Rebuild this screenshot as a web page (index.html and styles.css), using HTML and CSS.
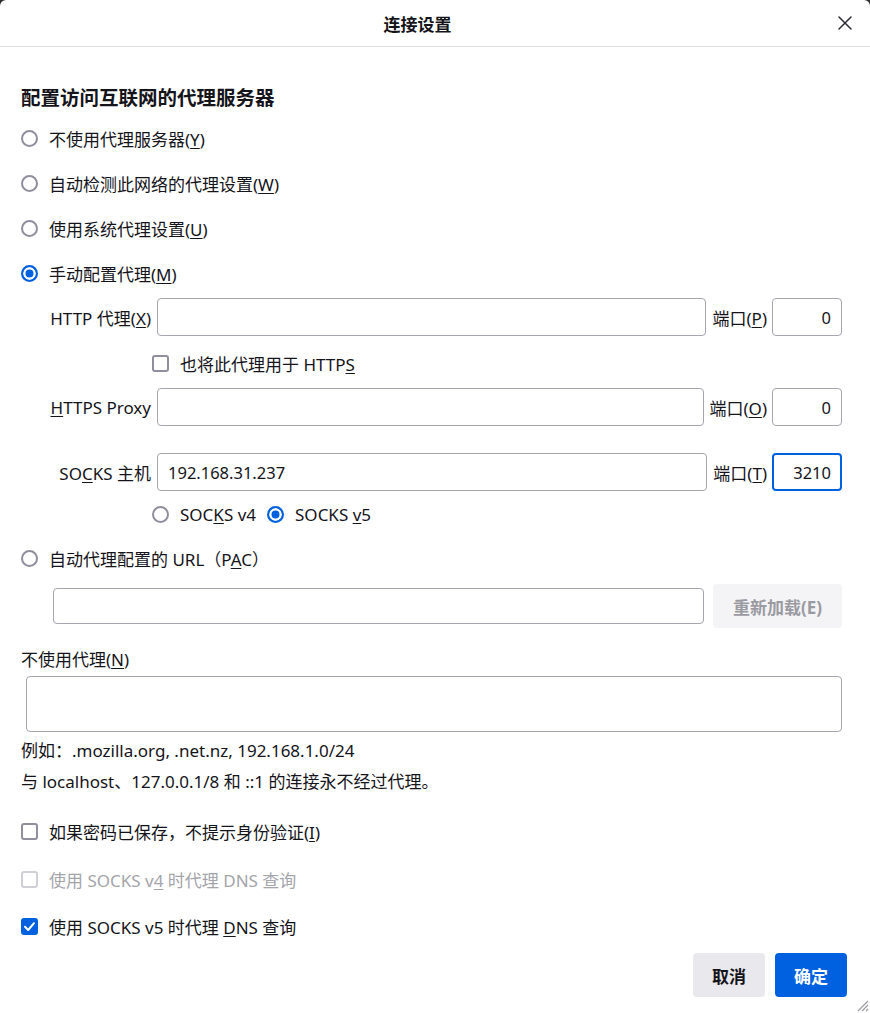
FILE: index.html
```html
<!DOCTYPE html>
<html lang="zh-CN">
<head>
<meta charset="utf-8">
<title>连接设置</title>
<link rel="stylesheet" href="styles.css">
</head>
<body>
<div class="dialog">
  <header class="titlebar">
    <div class="title">连接设置</div>
    <div class="close">
      <svg width="14" height="14" viewBox="0 0 14 14"><path d="M1 1L13 13M13 1L1 13" stroke="#2b2a33" stroke-width="1.5" stroke-linecap="round" fill="none"/></svg>
    </div>
  </header>
  <main class="content">
    <h1 class="heading">配置访问互联网的代理服务器</h1>

    <div class="radio-list">
      <div class="opt-row big"><span class="radio"></span><span class="lbl">不使用代理服务器(<u>Y</u>)</span></div>
      <div class="opt-row big"><span class="radio"></span><span class="lbl">自动检测此网络的代理设置(<u>W</u>)</span></div>
      <div class="opt-row big"><span class="radio"></span><span class="lbl">使用系统代理设置(<u>U</u>)</span></div>
      <div class="opt-row big"><span class="radio checked"></span><span class="lbl">手动配置代理(<u>M</u>)</span></div>
    </div>

    <div class="proxy-row row-http">
      <span class="field-label">HTTP 代理(<u>X</u>)</span>
      <div class="field"></div>
      <span class="port-label">端口(<u>P</u>)</span>
      <div class="field port">0</div>
    </div>

    <div class="opt-row indent row-also"><span class="checkbox"></span><span class="lbl">也将此代理用于 HTTP<u>S</u></span></div>

    <div class="proxy-row row-https">
      <span class="field-label"><u>H</u>TTPS Proxy</span>
      <div class="field"></div>
      <span class="port-label">端口(<u>O</u>)</span>
      <div class="field port">0</div>
    </div>

    <div class="proxy-row row-socks">
      <span class="field-label">SO<u>C</u>KS 主机</span>
      <div class="field">192.168.31.237</div>
      <span class="port-label">端口(<u>T</u>)</span>
      <div class="field port focused">3210</div>
    </div>

    <div class="opt-row indent row-ver">
      <span class="radio"></span><span class="lbl ver">SOC<u>K</u>S v4</span>
      <span class="radio checked"></span><span class="lbl">SOCKS <u>v</u>5</span>
    </div>

    <div class="opt-row row-pac"><span class="radio"></span><span class="lbl">自动代理配置的 URL（P<u>A</u>C）</span></div>

    <div class="pac-row">
      <div class="field pac"></div>
      <div class="btn disabled">重新加载(E)</div>
    </div>

    <div class="text-line row-noproxy">不使用代理(<u>N</u>)</div>
    <div class="field textarea"></div>
    <div class="text-line row-example">例如：.mozilla.org, .net.nz, 192.168.1.0/24</div>
    <div class="text-line row-local">与 localhost、127.0.0.1/8 和 ::1 的连接永不经过代理。</div>

    <div class="opt-row row-cb1"><span class="checkbox"></span><span class="lbl">如果密码已保存，不提示身份验证(<u>I</u>)</span></div>
    <div class="opt-row row-cb2 disabled-row"><span class="checkbox disabled"></span><span class="lbl">使用 SOCKS v<u>4</u> 时代理 DNS 查询</span></div>
    <div class="opt-row row-cb3"><span class="checkbox checked">
      <svg width="17" height="17" viewBox="0 0 17 17"><path d="M4 8.8L7.2 12L13 5.2" stroke="#fff" stroke-width="2" fill="none" stroke-linecap="round" stroke-linejoin="round"/></svg>
    </span><span class="lbl">使用 SOCKS v5 时代理 <u>D</u>NS 查询</span></div>

    <div class="actions">
      <div class="btn">取消</div>
      <div class="btn primary">确定</div>
    </div>
  </main>
  <svg class="grip" width="12" height="12" viewBox="0 0 12 12"><path d="M11 1L1 11M11 5L5 11M11 9L9 11" stroke="#9a9aa0" stroke-width="1.2" fill="none"/></svg>
</div>
</body>
</html>
```

FILE: styles.css
```css
html, body {
  margin: 0;
  padding: 0;
  background: #2e2e2e;
}

.dialog {
  position: relative;
  width: 870px;
  height: 1013px;
  background: #ffffff;
  border-radius: 6px 6px 0 0;
  overflow: hidden;
  font-family: "Noto Sans", "Noto Sans CJK SC", sans-serif;
  font-size: 17px;
  color: #15141a;
}

u {
  text-decoration: underline;
  text-underline-offset: 2px;
  text-decoration-thickness: 1px;
}

.titlebar {
  display: flex;
  align-items: center;
  height: 46px;
  border-bottom: 1px solid #dcdce1;
}

.title {
  flex: 1;
  text-align: center;
  font-weight: 700;
  font-size: 17px;
}

.close {
  width: 20px;
  margin-right: 15px;
  display: flex;
  justify-content: center;
  align-items: center;
}

.content {
  display: flex;
  flex-direction: column;
  padding: 0 28px 0 21px;
}

.heading {
  margin: 37px 0 0 0;
  height: 28px;
  line-height: 28px;
  font-size: 19.5px;
  font-weight: 700;
}

.radio-list {
  display: flex;
  flex-direction: column;
  margin-top: 4px;
}

.opt-row {
  display: flex;
  align-items: center;
  height: 30px;
}

.opt-row.big {
  height: 45px;
}

.opt-row.indent {
  padding-left: 131px;
}

.radio {
  box-sizing: border-box;
  flex: none;
  width: 17px;
  height: 17px;
  border: 2px solid #8f8f9d;
  border-radius: 50%;
  background: #fff;
}

.radio.checked {
  border-color: #0061e0;
  background: #0061e0;
  box-shadow: inset 0 0 0 2.5px #fff;
}

.checkbox {
  box-sizing: border-box;
  flex: none;
  width: 17px;
  height: 17px;
  border: 2px solid #8f8f9d;
  border-radius: 3px;
  background: #fff;
  display: flex;
}

.checkbox.checked {
  border: none;
  background: #0061e0;
}

.checkbox.disabled {
  border-color: #cfcfd6;
}

.lbl {
  margin-left: 11px;
  white-space: nowrap;
}

.lbl.ver {
  margin-right: 11px;
}

.disabled-row .lbl {
  color: #a4a4ab;
}

.proxy-row {
  display: flex;
  align-items: center;
  height: 38px;
}

.field-label {
  width: 130px;
  flex: none;
  text-align: right;
  white-space: nowrap;
}

.field {
  box-sizing: border-box;
  height: 38px;
  border: 1px solid #a6a6ae;
  border-radius: 4px;
  background: #fff;
  display: flex;
  align-items: center;
  padding: 0 10px;
  font-size: 16.5px;
}

.proxy-row .field:not(.port) {
  flex: 1;
  margin-left: 6px;
}

.port-label {
  margin-left: 6px;
  white-space: nowrap;
}

.field.port {
  width: 70px;
  flex: none;
  margin-left: 5px;
  justify-content: flex-end;
}

.field.port.focused {
  border: 2px solid #0061e0;
  padding-right: 9px;
}

.row-http { margin-top: 2px; }
.row-also { margin-top: 12px; }
.row-https { margin-top: 10px; }
.row-socks { margin-top: 27px; }
.row-ver { margin-top: 8px; }
.row-pac { margin-top: 14px; }

.pac-row {
  display: flex;
  align-items: center;
  margin-top: 11px;
  padding-left: 32px;
}

.field.pac {
  flex: 1;
  height: 36px;
}

.btn {
  box-sizing: border-box;
  height: 44px;
  display: flex;
  align-items: center;
  justify-content: center;
  padding: 0 19px;
  border-radius: 4px;
  background: #e9e9ed;
  font-weight: 700;
  white-space: nowrap;
}

.pac-row .btn {
  margin-left: 9px;
  width: 129px;
}

.btn.disabled {
  background: #f4f4f6;
  color: #9a9aa1;
}

.btn.primary {
  background: #0061e0;
  color: #fff;
}

.text-line {
  height: 24px;
  line-height: 24px;
  white-space: nowrap;
}

.row-noproxy { margin-top: 20px; }

.field.textarea {
  margin-top: 4px;
  margin-left: 5px;
  height: 56px;
}

.row-example { margin-top: 7px; }
.row-local { margin-top: 7px; }
.row-cb1 { margin-top: 22px; }
.row-cb2 { margin-top: 18px; }
.row-cb3 { margin-top: 17px; }

.actions {
  display: flex;
  justify-content: flex-end;
  gap: 10px;
  margin-top: 12px;
  margin-right: -5px;
}

.actions .btn {
  width: 72px;
  padding: 0;
}

.grip {
  position: absolute;
  right: 1px;
  bottom: 1px;
}
```
